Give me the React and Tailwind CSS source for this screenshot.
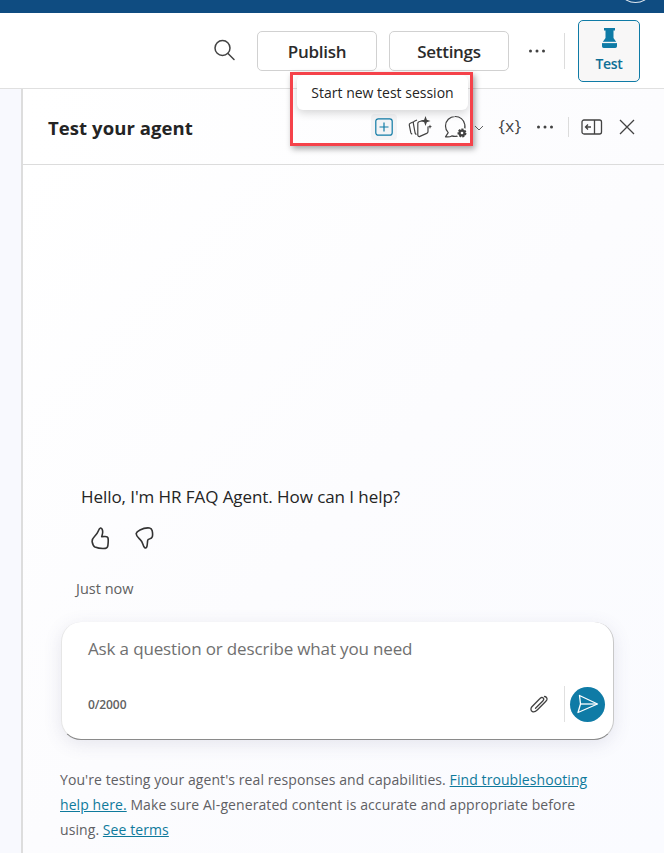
import React from "react";

const F = { fontFamily: '"Open Sans", "Noto Sans", sans-serif' };

function Dots({ className = "" }) {
  return (
    <svg width="18" height="4" viewBox="0 0 18 4" className={className}>
      <circle cx="2.5" cy="2" r="1.5" fill="#424242" />
      <circle cx="9" cy="2" r="1.5" fill="#424242" />
      <circle cx="15.5" cy="2" r="1.5" fill="#424242" />
    </svg>
  );
}

export default function App() {
  return (
    <div className="relative w-[664px] h-[853px] overflow-hidden bg-white flex flex-col text-[#242424]" style={F}>
      <div className="h-[13px] bg-[#0f4c81] shrink-0 relative">
        <div className="absolute left-[623px] top-[-12px] w-[25px] h-[15px] rounded-[50%] border border-[#dfe7ef]" />
      </div>

      <div className="h-[76px] shrink-0 border-b border-[#e0e0e0] flex items-center pl-[212px] pr-[24px] bg-white">
        <svg width="24" height="24" viewBox="0 0 24 24" fill="none" stroke="#424242" strokeWidth="1.5" className="mt-[-1px]">
          <circle cx="10.5" cy="10" r="7.5" />
          <path d="M16 15.5l6 6" strokeLinecap="round" />
        </svg>
        <button className="ml-[21px] w-[120px] h-[40px] pt-[3px] border border-[#d1d1d1] rounded-[5px] text-[17px] font-semibold tracking-[-0.3px] text-[#2b2b2b]">Publish</button>
        <button className="ml-[12px] w-[120px] h-[40px] pt-[3px] border border-[#d1d1d1] rounded-[5px] text-[17px] font-semibold tracking-[-0.3px] text-[#2b2b2b]">Settings</button>
        <Dots className="ml-[19px]" />
        <div className="ml-[18px] w-px h-[36px] bg-[#dcdcdc]" />
        <button className="ml-[13px] w-[62px] h-[62px] border border-[#0f7ba6] rounded-[5px] bg-[#f8f7f7] flex flex-col items-center justify-start pt-[7px] text-[#0f6f96]">
          <svg width="15" height="20" viewBox="0 0 15 20" fill="#0f7ba6">
            <path d="M2 0h11v2.500h-1.500V10L15 15v3c0 1-.7 2-1.700 2H1.700C.7 20 0 19 0 18v-3l3.500-5V2.500H2z" />
            <rect x="0" y="13.800" width="15" height="1.300" fill="#f8f7f7" />
          </svg>
          <span className="text-[14px] font-semibold leading-[18px] mt-[7px] tracking-[-0.3px]">Test</span>
        </button>
      </div>

      <div className="flex-1 flex min-h-0">
        <div className="w-[21px] bg-[#f8f9fe] shrink-0" />
        <div className="flex-1 border-l-2 border-[#dddddd] flex flex-col min-w-0">
          <div className="h-[76px] shrink-0 border-b border-[#dcdcdc] flex items-center pl-[25px] bg-gradient-to-r from-white to-[#fcfcfe]">
            <span className="text-[18.5px] font-bold tracking-[0.08px] text-[#242424] mt-[3px]">Test your agent</span>
            <div className="ml-auto flex items-center pr-[29px]">
              <div className="w-[26px] h-[26px] rounded-[4px] bg-[#f4f4f6] flex items-center justify-center">
                <svg width="18" height="18" viewBox="0 0 18 18" fill="none" stroke="#0f7ba6" strokeWidth="1.2">
                  <rect x="0.800" y="0.800" width="16.400" height="16.400" rx="2.500" />
                  <path d="M9 4.500v9M4.500 9h9" />
                </svg>
              </div>
              <svg width="24" height="22" viewBox="0 0 24 22" fill="none" stroke="#424242" strokeWidth="1.2" className="ml-[11px]" strokeLinejoin="round">
                <path d="M5 6 2.300 7.200C1.500 7.600 1.100 8.300 1.300 9.200l1.500 7.500c.2.800.7 1.200 1.400 1.400" />
                <path d="M9 4 6.300 5.300c-.8.400-1.100 1.100-1 1.900l1.800 9.800c.2.800.7 1.300 1.400 1.400" />
                <path d="M15 4.500 11 5.800c-.8.300-1.200.9-1.200 1.700V19c0 1.200 1 1.900 2.100 1.400l6.800-3c.8-.4 1.300-1.100 1.300-2v-5" />
                <path d="M17.500 0l1.300 3.700 3.700 1.300-3.700 1.300-1.300 3.700-1.300-3.700L12.500 5l3.700-1.300z" fill="#424242" stroke="none" />
                <path d="M22 8.500l.6 1.600 1.400.6-1.400.6-.6 1.600-.6-1.600-1.400-.6 1.400-.6z" fill="#424242" stroke="none" />
              </svg>
              <svg width="24" height="24" viewBox="0 0 24 24" fill="none" stroke="#424242" strokeWidth="1.2" className="ml-[12px]">
                <path d="M12 21.300A10 10 0 0 0 20.800 9.500 9.600 9.600 0 0 0 11 1.500a9.500 9.500 0 0 0-9.500 9.500c0 2.600 1 5 2.700 6.700L1.500 21.800c2.800.4 4.900 0 6.300-.9 1.300.4 2.900.6 4.200.4z" strokeLinejoin="round" />
                <circle cx="18" cy="18" r="5.500" fill="#fff" stroke="none" />
                <circle cx="18" cy="18" r="3.500" fill="#424242" stroke="#424242" strokeDasharray="2 1.100" strokeWidth="2" />
                <circle cx="18" cy="18" r="1.300" fill="#fff" stroke="none" />
              </svg>
              <svg width="10" height="6" viewBox="0 0 10 6" fill="none" stroke="#616161" strokeWidth="1" className="ml-[6px] mt-[2px]">
                <path d="M1 1l4 4 4-4" />
              </svg>
              <span className="ml-[14px] text-[17px] leading-none text-[#424242] w-[24px] text-center whitespace-nowrap tracking-[0.5px] mt-[-2px]">{"{x}"}</span>
              <Dots className="ml-[14px]" />
              <div className="ml-[14px] w-px h-[20px] bg-[#dcdcdc]" />
              <svg width="22" height="16" viewBox="0 0 22 16" fill="none" stroke="#424242" strokeWidth="1.300" className="ml-[12px]">
                <rect x="1" y="1" width="19.500" height="14" rx="2" />
                <path d="M13.500 1v14M10 8H4.500M7 5.500 4.500 8 7 10.500" />
              </svg>
              <svg width="16" height="16" viewBox="0 0 16 16" fill="none" stroke="#424242" strokeWidth="1.300" className="ml-[16px]">
                <path d="M1 1l14 14M15 1 1 15" />
              </svg>
            </div>
          </div>

          <div className="flex-1 relative flex flex-col bg-gradient-to-br from-white via-[#fcfcfe] to-[#fafbff] pl-[37px] pr-[49px]">
            <div className="h-[320px] shrink-0" />
            <p className="pl-[21px] text-[17px] leading-[24px] tracking-[-0.07px] text-[#242424] whitespace-nowrap">Hello, I'm HR FAQ Agent. How can I help?</p>
            <div className="flex items-center pl-[31px] mt-[17px] gap-[24px] h-[24px]">
              <svg width="20" height="23" viewBox="0 0 20 23" fill="none" stroke="#333" strokeWidth="1.600" strokeLinejoin="round">
                <path d="M9.500 1c-1.200.2-1.700 1.700-2.300 3.300C6.500 6.300 5 8 3.500 9.500 2 11 .8 13 1.200 15c.4 2 1.200 4.200 2.700 5 2.500 1 7.500 1.700 10.500 1.400 1.800-.2 2.300-1.400 2.500-3 .3-2.400.6-5 .1-7.400-.3-1.300-1.500-1.500-3-1.500-.8 0-2 0-3.300.1.500-1.600 1-3 1-4.600 0-2.200-.9-4.200-2.200-4z" />
              </svg>
              <svg width="19" height="23" viewBox="0 0 19 23" fill="none" stroke="#333" strokeWidth="1.600" strokeLinejoin="round">
                <path d="M1.200 6.500C1.500 5 3 4 5 3c2.500-1.300 6-2.400 9.500-2 1.500.2 2.300 1.200 2.700 2.800.4 1.800.6 4 .1 6-.4 1.600-1.800 2-3 2.200-.8.100-1.600.8-1.700 1.800-.2 1.800-.2 4-.7 5.700-.3 1.200-1.300 2-2.200 1.200-.9-.8-1.400-2.200-1.900-3.800-.5-1.700-1.300-3-2.800-4.500C3.300 10.700 1 9 1.200 6.500z" />
              </svg>
            </div>
            <p className="mt-[29px] pl-[16px] text-[14.5px] leading-[20px] text-[#616161]">Just now</p>

            <div className="mt-[23px] ml-[1px] w-[553px] h-[118px] shrink-0 rounded-[20px] bg-white border-b border-r border-l border-l-[#e6e6e6] border-r-[#c8c8c8] border-b-[#8a8a8a] shadow-[0_4px_18px_rgba(80,80,120,0.13)] flex flex-col pl-[26px] pr-[8px]">
              <p className="mt-[14px] text-[17px] leading-[26px] tracking-[-0.15px] text-[#707070] whitespace-nowrap">Ask a question or describe what you need</p>
              <div className="mt-[auto] mb-[17px] flex items-center">
                <span className="text-[12px] font-semibold tracking-[-0.1px] text-[#616161] mt-[2px]">0/2000</span>
                <svg width="20" height="20" viewBox="0 0 20 20" fill="none" stroke="#424242" strokeWidth="1.300" strokeLinecap="round" className="ml-auto mr-[15px]">
                  <path d="M15.500 2.500c1.500 0 3 1.500 2.400 3.300-.3.800-1 1.500-1.500 2L8.500 15.700c-1.500 1.500-3.200 2.800-5 2-1.800-.8-2-3.200-.8-4.700L11 4.500c1-1.100 2.300-1.400 3.200-.5.900.9.500 2.100-.4 3L6.500 14.300" />
                </svg>
                <div className="w-px h-[36px] bg-[#e0e0e0] mr-[5px]" />
                <div className="w-[35px] h-[35px] rounded-full bg-[#0f7ba6] flex items-center justify-center">
                  <svg width="22" height="20" viewBox="0 0 22 20" fill="none" stroke="#fff" strokeWidth="1.300" strokeLinejoin="round">
                    <path d="M2.500 1.500 20.500 10 1 18.500 3.500 10z" />
                    <path d="M3.500 10H20" />
                  </svg>
                </div>
              </div>
            </div>

            <p className="mt-[27px] w-[540px] text-[14px] leading-[25px] tracking-[0.08px] text-[#5f6064]">
              You're testing your agent's real responses and capabilities.{" "}
              <span className="text-[#0f7a9c] underline">Find troubleshooting help here.</span>{" "}
              Make sure AI-generated content is accurate and appropriate before using.{" "}
              <span className="text-[#0f7a9c] underline">See terms</span>
            </p>
          </div>
        </div>
      </div>

      {/* Tooltip callout */}
      <div className="absolute left-[297px] top-[75px] w-[171px] h-[35px] bg-white rounded-[6px] shadow-[0_3px_8px_rgba(0,0,0,0.16)] flex items-center justify-center text-[14px] whitespace-nowrap text-[#242424]">
        Start new test session
      </div>
      {/* Red highlight box */}
      <div className="absolute left-[290px] top-[72px] w-[183px] h-[74px] border-[3px] border-[#f5424a] shadow-[2px_3px_6px_rgba(0,0,0,0.35)]" />
    </div>
  );
}
